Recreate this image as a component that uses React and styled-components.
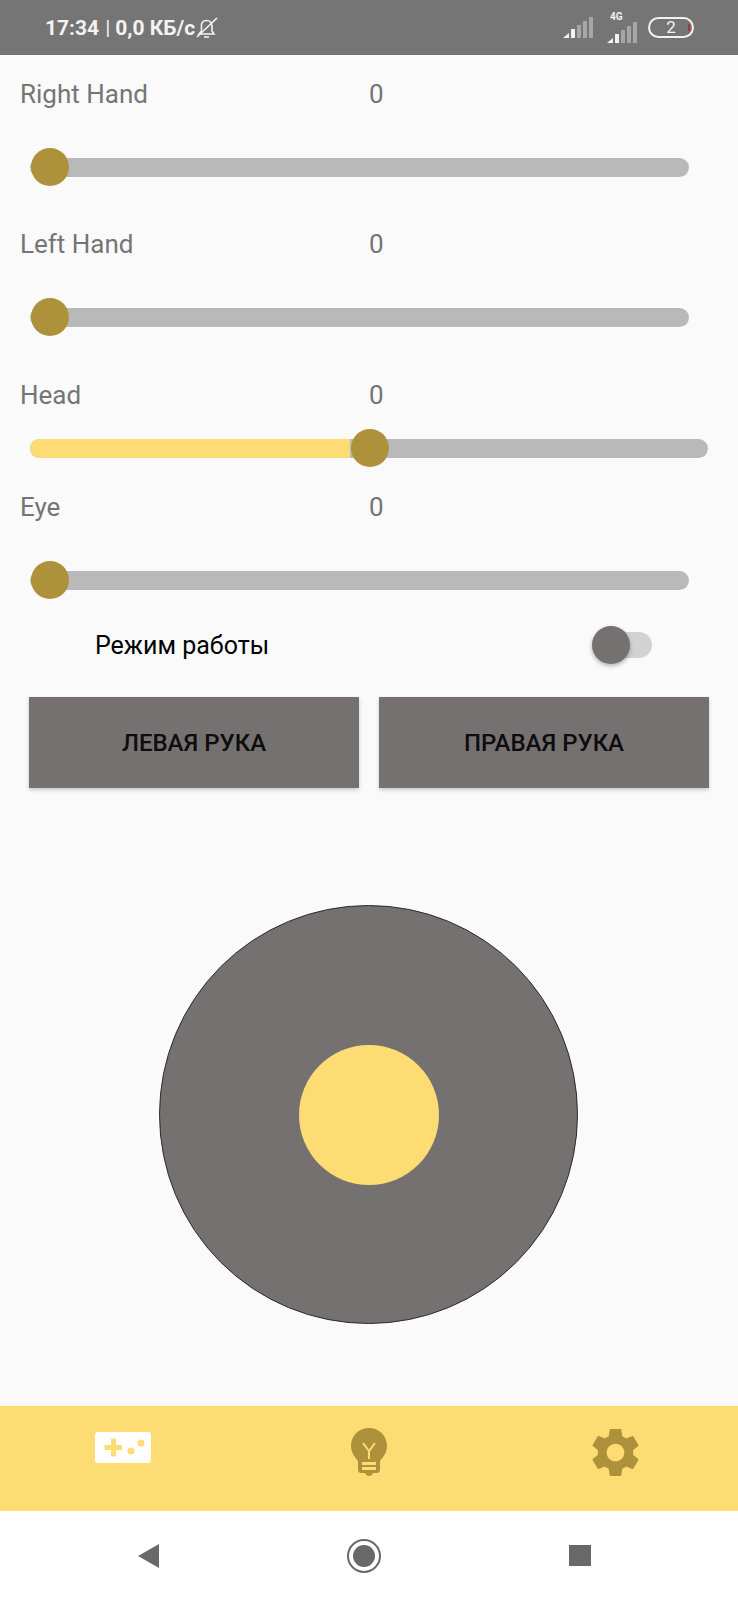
import React from "react";
import styled, { createGlobalStyle } from "styled-components";

const GlobalStyle = createGlobalStyle`
  html, body {
    margin: 0;
    padding: 0;
    background: #fff;
  }
  * {
    box-sizing: border-box;
  }
`;

const Screen = styled.div`
  width: 738px;
  height: 1600px;
  display: flex;
  flex-direction: column;
  background: #fafafa;
  font-family: Roboto, "Liberation Sans", sans-serif;
  overflow: hidden;
`;

const StatusBar = styled.div`
  height: 55px;
  flex-shrink: 0;
  display: flex;
  align-items: center;
  padding: 0 44px 0 45px;
  background: #757575;
  color: #f2f2f2;
`;

const StatusText = styled.span`
  font-size: 21px;
  font-weight: 700;
  white-space: nowrap;
`;

const StatusThin = styled.span`
  font-weight: 400;
  margin: 0 5px 0 6px;
`;

const StatusIcons = styled.div`
  margin-left: auto;
  display: flex;
  align-items: center;
`;

const Network = styled.div`
  display: flex;
  flex-direction: column;
  align-items: flex-start;
  margin-left: 14px;
`;

const NetworkLabel = styled.span`
  font-size: 10px;
  font-weight: 700;
  line-height: 10px;
  margin-left: 3px;
`;

const Battery = styled.div`
  position: relative;
  width: 46px;
  height: 21px;
  margin-left: 11px;
  border: 2px solid #f2f2f2;
  border-radius: 11px;
  display: flex;
  align-items: center;
  justify-content: center;
  font-size: 17px;
  line-height: 1;
`;

const BatteryMark = styled.span`
  position: absolute;
  right: 2px;
  top: 5px;
  width: 2px;
  height: 7px;
  background: #a8383c;
`;

const Content = styled.main`
  flex: 1;
  display: flex;
  flex-direction: column;
  padding-top: 19px;
`;

const SliderBlock = styled.section`
  display: flex;
  flex-direction: column;
  gap: ${(p) => p.$gap}px;
  margin-bottom: ${(p) => p.$after}px;
`;

const LabelRow = styled.div`
  height: 40px;
  display: flex;
  align-items: center;
  padding-left: 20px;
  color: #757575;
  font-size: 26px;
`;

const LabelName = styled.span`
  width: 349px;
`;

const Track = styled.div`
  position: relative;
  height: 19px;
  width: ${(p) => p.$width}px;
  margin: 9.5px 0 9.5px 30px;
  border-radius: 10px;
  background: #b9b9b9;
`;

const TrackFill = styled.div`
  height: 100%;
  border-radius: 10px 0 0 10px;
  background: #fedc74;
`;

const Thumb = styled.div`
  position: absolute;
  top: -9.5px;
  width: 38px;
  height: 38px;
  border-radius: 50%;
  background: #ae923b;
`;

const ModeRow = styled.div`
  height: 40px;
  display: flex;
  align-items: center;
  padding: 0 86px 0 95px;
  justify-content: space-between;
  color: #000;
  font-size: 25px;
`;

const Switch = styled.div`
  position: relative;
  width: 60px;
  height: 26px;
  border-radius: 13px;
  background: #d2d2d2;
`;

const SwitchKnob = styled.div`
  position: absolute;
  left: 0;
  top: -6px;
  width: 38px;
  height: 38px;
  border-radius: 50%;
  background: #757170;
  box-shadow: 0 2px 4px rgba(0, 0, 0, 0.3);
`;

const ButtonRow = styled.div`
  display: flex;
  gap: 20px;
  margin: 32px 29px 0;
`;

const HandButton = styled.button`
  flex: 1;
  height: 91px;
  border: none;
  padding: 0;
  background: #757170;
  color: #0d0d0d;
  font-family: inherit;
  font-size: 24px;
  font-weight: 500;
  box-shadow: 0 2px 4px rgba(0, 0, 0, 0.2);
`;

const JoystickBase = styled.div`
  width: 419px;
  height: 419px;
  margin: 117px auto 0 159px;
  border-radius: 50%;
  border: 1px solid #2b2b2b;
  background: #757170;
  display: flex;
  align-items: center;
  justify-content: center;
`;

const JoystickStick = styled.div`
  width: 140px;
  height: 140px;
  border-radius: 50%;
  background: #fedc74;
`;

const TabBar = styled.nav`
  height: 105px;
  flex-shrink: 0;
  position: relative;
  background: #fedc74;
  display: grid;
  grid-template-columns: repeat(3, 1fr);
`;

const Tab = styled.div`
  display: flex;
  justify-content: center;
  padding-top: ${(p) => p.$top}px;
`;

const SystemNav = styled.div`
  height: 89px;
  flex-shrink: 0;
  background: #fff;
  display: grid;
  grid-template-columns: repeat(3, 1fr);
  padding: 0 50px 0 40px;
`;

const SystemSlot = styled.div`
  display: flex;
  align-items: center;
  justify-content: center;
  padding-bottom: 0;
`;

const HomeRing = styled.div`
  width: 34px;
  height: 34px;
  border-radius: 50%;
  border: 2px solid #696969;
  display: flex;
  align-items: center;
  justify-content: center;
`;

const HomeDot = styled.div`
  width: 22px;
  height: 22px;
  border-radius: 50%;
  background: #696969;
`;

const RecentSquare = styled.div`
  width: 22px;
  height: 21px;
  background: #696969;
`;

const SignalIcon = () => (
  <svg width="30" height="21" viewBox="0 0 30 21">
    <path d="M0 21 L6 16 V21 Z" fill="#f2f2f2" />
    <rect x="8" y="12" width="4" height="9" fill="#f2f2f2" />
    <rect x="14" y="8" width="4" height="13" fill="#a6a6a6" />
    <rect x="20" y="4" width="4" height="17" fill="#a6a6a6" />
    <rect x="26" y="0" width="4" height="21" fill="#a6a6a6" />
  </svg>
);

const BellOffIcon = () => (
  <svg width="24" height="24" viewBox="0 0 24 24" fill="none" stroke="#f2f2f2" strokeWidth="1.6">
    <path d="M4 18 H19 L17 15 V10 C17 6.5 14.5 4.5 11.5 4.5 C9 4.5 7 6 6.5 8.5 V15 Z" />
    <path d="M9 21 H14" />
    <path d="M2 21 L22 2" />
  </svg>
);

const GameIcon = () => (
  <svg width="56" height="31" viewBox="0 0 56 31">
    <rect width="56" height="31" rx="3" fill="#fff" />
    <path d="M12.5 13 H19 V6.5 H24 V13 H30 V18 H24 V24.500 H19 V18 H12.500 Z" transform="translate(-3 0)" fill="#fedc74" />
    <circle cx="36" cy="19" r="3.500" fill="#fedc74" />
    <circle cx="46" cy="11" r="3.500" fill="#fedc74" />
  </svg>
);

const BulbIcon = () => (
  <svg width="36" height="48" viewBox="0 0 36 48">
    <path
      d="M18 0 C8 0 0 7.500 0 18 C0 25 4 29 7 33 V42 C7 44 8.500 45 10 45 H14 C15 47 16 48 18 48 C20 48 21 47 22 45 H26 C27.500 45 29 44 29 42 V33 C32 29 36 25 36 18 C36 7.500 28 0 18 0 Z"
      fill="#ae923b"
    />
    <path d="M12 15 L18 23 L24 15 M18 23 V31" fill="none" stroke="#fedc74" strokeWidth="2" />
    <rect x="11" y="34" width="14" height="3" fill="#fedc74" />
    <rect x="11" y="39" width="14" height="3" fill="#fedc74" />
  </svg>
);

const GearIcon = () => (
  <svg width="59" height="59" viewBox="0 0 24 24" fill="#ae923b">
    <path d="M19.14 12.94c.04-.3.06-.61.06-.94 0-.32-.02-.64-.07-.94l2.03-1.58c.18-.14.23-.41.12-.61l-1.92-3.32c-.12-.22-.37-.29-.59-.22l-2.39.96c-.5-.38-1.03-.7-1.62-.94l-.36-2.54c-.04-.24-.24-.41-.48-.41h-3.84c-.24 0-.43.17-.47.41l-.36 2.54c-.59.24-1.13.57-1.62.94l-2.39-.96c-.22-.08-.47 0-.59.22L2.74 8.87c-.12.21-.08.47.12.61l2.03 1.58c-.05.3-.09.63-.09.94s.02.64.07.94l-2.03 1.58c-.18.14-.23.41-.12.61l1.92 3.32c.12.22.37.29.59.22l2.39-.96c.5.38 1.03.7 1.62.94l.36 2.54c.05.24.24.41.48.41h3.84c.24 0 .44-.17.47-.41l.36-2.54c.59-.24 1.13-.56 1.62-.94l2.39.96c.22.08.47 0 .59-.22l1.92-3.32c.12-.22.07-.47-.12-.61l-2.01-1.58zM12 15.6c-1.98 0-3.6-1.62-3.6-3.6s1.62-3.6 3.6-3.6 3.6 1.62 3.6 3.6-1.62 3.6-3.6 3.6z" />
  </svg>
);

const BackIcon = () => (
  <svg width="21" height="24" viewBox="0 0 21 24">
    <path d="M21 0 V24 L0 12 Z" fill="#696969" />
  </svg>
);

const sliders = [
  { name: "Right Hand", width: 659, thumb: 1, gap: 34, after: 38 },
  { name: "Left Hand", width: 659, thumb: 1, gap: 34, after: 39 },
  { name: "Head", width: 678, thumb: 320.5, fill: 320, gap: 14, after: 20 },
  { name: "Eye", width: 659, thumb: 1, gap: 34, after: 26 },
];

const App = () => {
  return (
    <>
      <GlobalStyle />
      <Screen>
        <StatusBar>
          <StatusText>
            17:34<StatusThin>|</StatusThin>0,0 КБ/с
          </StatusText>
          <BellOffIcon />
          <StatusIcons>
            <SignalIcon />
            <Network>
              <NetworkLabel>4G</NetworkLabel>
              <SignalIcon />
            </Network>
            <Battery>
              2
              <BatteryMark />
            </Battery>
          </StatusIcons>
        </StatusBar>

        <Content>
          {sliders.map((s) => (
            <SliderBlock key={s.name} $gap={s.gap} $after={s.after}>
              <LabelRow>
                <LabelName>{s.name}</LabelName>
                <span>0</span>
              </LabelRow>
              <Track $width={s.width}>
                {s.fill && <TrackFill style={{ width: s.fill }} />}
                <Thumb style={{ left: s.thumb }} />
              </Track>
            </SliderBlock>
          ))}

          <ModeRow>
            <span>Режим работы</span>
            <Switch>
              <SwitchKnob />
            </Switch>
          </ModeRow>

          <ButtonRow>
            <HandButton>ЛЕВАЯ РУКА</HandButton>
            <HandButton>ПРАВАЯ РУКА</HandButton>
          </ButtonRow>

          <JoystickBase>
            <JoystickStick />
          </JoystickBase>
        </Content>

        <TabBar>
          <Tab $top={26}>
            <GameIcon />
          </Tab>
          <Tab $top={22}>
            <BulbIcon />
          </Tab>
          <Tab $top={17}>
            <GearIcon />
          </Tab>
        </TabBar>

        <SystemNav>
          <SystemSlot>
            <BackIcon />
          </SystemSlot>
          <SystemSlot>
            <HomeRing>
              <HomeDot />
            </HomeRing>
          </SystemSlot>
          <SystemSlot>
            <RecentSquare />
          </SystemSlot>
        </SystemNav>
      </Screen>
    </>
  );
};

export default App;
